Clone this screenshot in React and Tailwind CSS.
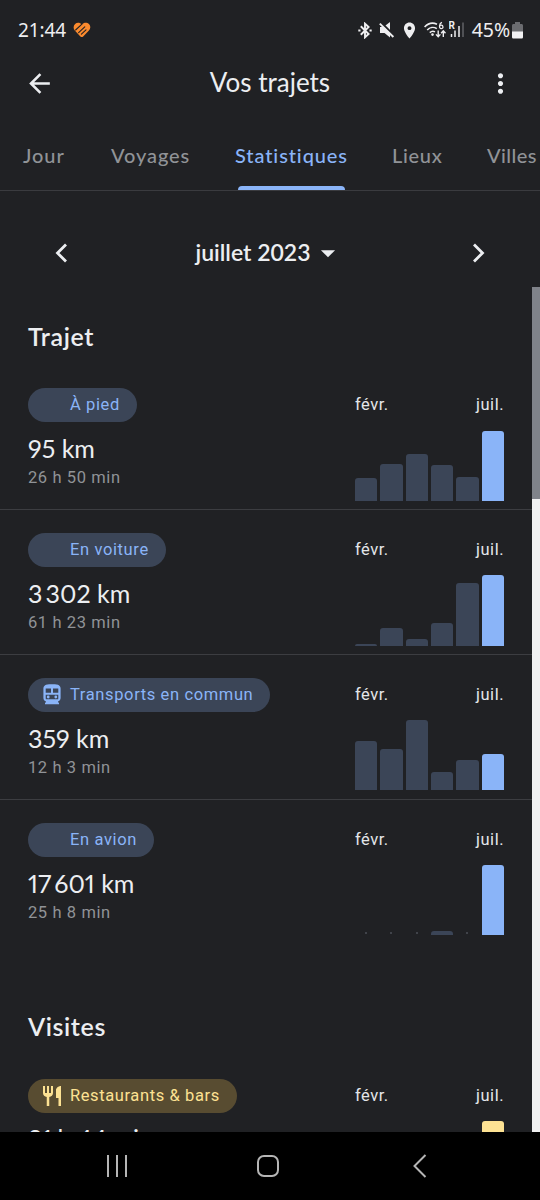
import React from 'react';
import { MdArrowBack, MdMoreVert, MdRestaurant, MdLocationOn, MdArrowDropDown } from 'react-icons/md';

const trips = [
    { label: 'À pied', value: '95 km', time: '26 h 50 min', bars: [22.5, 37, 47, 35.5, 24, 70] },
    { label: 'En voiture', value: '3\u2009302 km', time: '61 h 23 min', bars: [2, 17.5, 6.5, 22.5, 62.5, 70.5] },
    { label: 'Transports en commun', icon: 'train', value: '359 km', time: '12 h 3 min', bars: [49.5, 41.5, 70.5, 18.5, 30.5, 36] },
    { label: 'En avion', value: '17\u2009601 km', time: '25 h 8 min', bars: [0, 0, 0, 4, 0, 70] },
];

const TrainIcon = () => (
    <svg width="18" height="21" viewBox="0 0 18 21" className="shrink-0">
        <path
            fill="#8ab4f8"
            fillRule="evenodd"
            d="M4 .6C5.4.1 12.6.1 14 .6c2.3.7 3.600 1.800 3.600 4v9.400c0 2-1.200 3.200-2.600 3.400v1.200h1v1.600H2v-1.600h1v-1.200C1.600 17.200.4 16 .4 14V4.600C.4 2.400 1.700 1.300 4 .6zM2.700 4.400V8.700H8V4.400zM10 4.400V8.700h5.300V4.400zM2.700 10.800v3.600c0 .5.4.9.9.9h10.800c.5 0 .9-.4.9-.9v-3.600z"
        />
        <circle cx="5.200" cy="13" r="1.400" fill="#8ab4f8" />
        <circle cx="12.800" cy="13" r="1.400" fill="#8ab4f8" />
    </svg>
);

const StatusBar = () => (
    <div className="flex h-[60px] items-center justify-between pl-[18px] pr-[17px] text-[#eeeef0]">
        <div className="flex items-center gap-[7px]">
            <span className="font-['Noto_Sans'] text-[19px] leading-6 tracking-[-0.1px]">21:44</span>
            {/* Orange heart made of slanted strokes */}
            <svg width="18" height="16" viewBox="0 0 18 16" fill="none" strokeLinecap="round">
                <path fill="#fb8a2e" d="M8.800 2.300C6.900.3 3.900.2 2.100 1.900.1 3.800.2 6.900 2 8.700l5.400 5.700c.8.8 2 .8 2.800 0l5.700-5.800c1.900-1.900 1.900-4.800.1-6.600-1.900-1.900-5.100-1.800-7.200.3z" />
                <path d="M2.600 8 9.200 1.800M5.600 10.600l6.200-5.800M8.400 12.200l4.600-4.400" stroke="#202124" strokeWidth="1.100" />
            </svg>
        </div>
        <div className="flex items-center">
            <svg width="14" height="17" viewBox="0 0 14 17" fill="none" stroke="currentColor" strokeWidth="1.900">
                <path d="M2.800 4.300 10.600 12 7 15.300V1.700L10.600 5 2.800 12.700" />
                <path d="M.3 8.500h2.200M11.500 8.500h2.200" strokeWidth="2.200" />
            </svg>
            <svg width="16" height="16" viewBox="0 0 16 16" className="ml-[7px]">
                <path fill="currentColor" d="M1 5h3.500l6.500-5v15.500L5.500 11H1z" />
                <path d="M1.500 0 15.700 14.400" stroke="#202124" strokeWidth="2.400" />
                <path d="M.8 1.600 14.400 15" stroke="currentColor" strokeWidth="1.900" />
            </svg>
            <MdLocationOn className="ml-[5px] h-[19px] w-[19px]" />
            <svg width="22" height="18" viewBox="0 0 22 18" fill="none" stroke="currentColor" strokeWidth="1.600" className="ml-[5px]">
                <path d="M.6 6C4 2.400 9 1.400 13 3.200M3.200 9c2.600-2.700 6.500-3.400 9.600-1.400M5.800 11.600c1.600-1.500 3.500-1.700 5.200-.7" />
                <circle cx="8.500" cy="13.600" r="1.300" fill="currentColor" stroke="none" />
                <path d="M18 1.400c-3 .8-3.300 6.200-.8 6.200 2.400 0 2.300-3.400 0-3.400-1 0-1.700.8-1.700 1.700" strokeWidth="1.300" />
                <path d="M14.200 9.600v6M12 13.400l2.200 2.400 2.200-2.400M19.300 16v-6M17.100 12.200l2.200-2.400 2.200 2.400" strokeWidth="1.400" />
            </svg>
            <svg width="15" height="18" viewBox="0 0 15 18" className="ml-[3px]" fill="none" stroke="currentColor">
                <text x="-0.500" y="8" fontSize="10" fontFamily="Roboto" fontWeight="700" fill="currentColor" stroke="none">R</text>
                <path d="M2.500 13v3M6 9.500V16M10 5v11" strokeWidth="1.500" />
                <path d="M14 1.500V16" stroke="#606266" strokeWidth="1.500" />
            </svg>
            <span className="ml-[8px] font-['Noto_Sans'] text-[19.5px] leading-6 tracking-[-0.1px]">45%</span>
            <svg width="11" height="17" viewBox="0 0 11 17" className="ml-[2px]">
                <path fill="#6b6c70" d="M3 0h5v2h1.500c.9 0 1.500.6 1.500 1.500V15H0V3.500C0 2.600.6 2 1.500 2H3z" />
                <path fill="#f1f1f3" d="M0 9.500h11V15c0 1-.6 1.600-1.600 1.600H1.600C.6 16.600 0 16 0 15z" />
            </svg>
        </div>
    </div>
);

const Tabs = () => (
    <div className="flex h-[85px] overflow-hidden border-b border-[#3a3b3f] pl-[23px] pt-[35px] font-['Lato'] text-[20px] font-medium leading-7 tracking-[0.9px] text-[#909397]">
        <span className="w-[88px] shrink-0">Jour</span>
        <span className="w-[124px] shrink-0">Voyages</span>
        <div className="flex w-[157px] shrink-0 flex-col text-[#8ab4f8]">
            <span>Statistiques</span>
            <span className="ml-[3px] mt-auto h-[4px] w-[107px] rounded-t-[4px] bg-[#8ab4f8]" />
        </div>
        <span className="w-[95px] shrink-0 tracking-[0.7px]">Lieux</span>
        <span className="shrink-0 tracking-[0.4px]">Villes</span>
    </div>
);

const TripRow = ({ label, icon, value, time, bars, last }) => (
    <div className={`flex h-[144.8px] shrink-0 justify-between pl-7 pr-7 pt-[23px] ${last ? '' : 'border-b-[1.5px] border-[#3c3d41]'}`}>
        <div>
            <div className="flex h-[34px] w-fit items-center rounded-full bg-[#3b4557] pl-[15px] pr-[17px]">
                <span className="flex w-[27px]">{icon && <TrainIcon />}</span>
                <span className="font-['Roboto'] text-[16.5px] leading-5 tracking-[0.62px] text-[#8ab4f8]">{label}</span>
            </div>
            <div className="mt-[10px] font-['Lato'] text-[25px] leading-8 proportional-nums text-[#eceef1]">{value}</div>
            <div className="mt-[4px] font-['Roboto'] text-[16.5px] leading-5 tracking-[0.6px] text-[#909397]">{time}</div>
        </div>
        <Chart bars={bars} color="bg-[#8ab4f8]" />
    </div>
);

const Chart = ({ bars, color }) => (
    <div className="w-[149px]">
        <div className="mt-[7px] flex justify-between font-['Roboto'] text-[16.5px] leading-5 tracking-[0.5px] text-[#e4e6e9]">
            <span>févr.</span>
            <span>juil.</span>
        </div>
        <div className="mt-[14.5px] flex h-[71px] items-end gap-[3px]">
            {bars.map((bar, i) => (
                <div key={i} className="flex flex-1 justify-center">
                    {bar === 0 ? (
                        <span className="mb-[1px] h-[2px] w-[2px] rounded-full bg-[#4b4f57]" />
                    ) : (
                        <span
                            className={`w-full rounded-t-[3px] ${i === bars.length - 1 ? color : 'bg-[#3b4557]'}`}
                            style={{ height: bar }}
                        />
                    )}
                </div>
            ))}
        </div>
    </div>
);

const SectionTitle = ({ children }) => (
    <h2 className="h-[78.3px] shrink-0 pl-7 pt-[33px] font-['Lato'] text-[25px] font-semibold leading-8 tracking-[0.6px] text-[#eceef1]">{children}</h2>
);

const App = () => {
    return (
        <div className="flex h-[1200px] w-[540px] flex-col overflow-hidden bg-[#202124]">
            <StatusBar />

            {/* App bar */}
            <div className="flex h-[46px] items-center justify-between pl-[24px] pr-[24px] text-[#eceef1]">
                <MdArrowBack className="h-[31px] w-[31px]" />
                <h1 className="-mt-[2px] font-['Lato'] text-[26px] leading-8">Vos trajets</h1>
                <MdMoreVert className="h-[31px] w-[31px]" />
            </div>

            <Tabs />

            {/* Month picker */}
            <div className="flex h-[96px] items-center justify-between pl-[55px] pr-[55px] pt-[28px] text-[#eceef1]">
                <svg width="13" height="20" viewBox="0 0 13 20" fill="none" stroke="currentColor" strokeWidth="2.800">
                    <path d="M11 1.500 2.500 10l8.500 8.500" />
                </svg>
                <div className="flex items-center">
                    <span className="-mt-[2px] font-['Lato'] text-[23px] font-semibold leading-8">juillet 2023</span>
                    <MdArrowDropDown className="h-[34px] w-[34px]" />
                </div>
                <svg width="13" height="20" viewBox="0 0 13 20" fill="none" stroke="currentColor" strokeWidth="2.800">
                    <path d="M2 1.500 10.500 10 2 18.500" />
                </svg>
            </div>

            {/* Scrolling list */}
            <div className="flex h-[845px] overflow-hidden">
                <div className="flex flex-1 flex-col">
                    <SectionTitle>Trajet</SectionTitle>
                    {trips.map((trip, i) => (
                        <TripRow key={trip.label} {...trip} last={i === trips.length - 1} />
                    ))}
                    <div className="h-[33px] shrink-0" />
                    <SectionTitle>Visites</SectionTitle>
                    <div className="flex h-[144.8px] shrink-0 justify-between px-7 pt-[23px]">
                        <div>
                            <div className="flex h-[34px] w-fit items-center rounded-full bg-[#584c31] pl-[12px] pr-[17px]">
                                <MdRestaurant className="mr-[6px] h-6 w-6 text-[#fde293]" />
                                <span className="font-['Roboto'] text-[16.5px] leading-5 tracking-[0.6px] text-[#fde293]">Restaurants &amp; bars</span>
                            </div>
                            <div className="mt-[9px] font-['Lato'] text-[25px] leading-8 tracking-[-0.3px] proportional-nums text-[#eceef1]">21 h 44 min</div>
                        </div>
                        <Chart bars={[0, 0, 0, 0, 0, 70]} color="bg-[#fde293]" />
                    </div>
                </div>
                <div className="w-2 bg-[#f1f1f2]">
                    <div className="h-[212px] bg-[#80838a]" />
                </div>
            </div>

            {/* System navigation */}
            <div className="flex h-[68px] items-center bg-black pl-[106px] text-[#b5b5b5]">
                <svg width="22" height="22" viewBox="0 0 22 22" stroke="currentColor" strokeWidth="2">
                    <path d="M2 0v22M11 0v22M20 0v22" />
                </svg>
                <svg width="24" height="24" viewBox="0 0 24 24" fill="none" stroke="currentColor" strokeWidth="2" className="ml-[128px]">
                    <rect x="2" y="2" width="20" height="20" rx="6" />
                </svg>
                <svg width="14" height="24" viewBox="0 0 14 24" fill="none" stroke="currentColor" strokeWidth="2" className="ml-[133px]">
                    <path d="M12.500 1 1.500 12l11 11" />
                </svg>
            </div>
        </div>
    );
};

export default App;
